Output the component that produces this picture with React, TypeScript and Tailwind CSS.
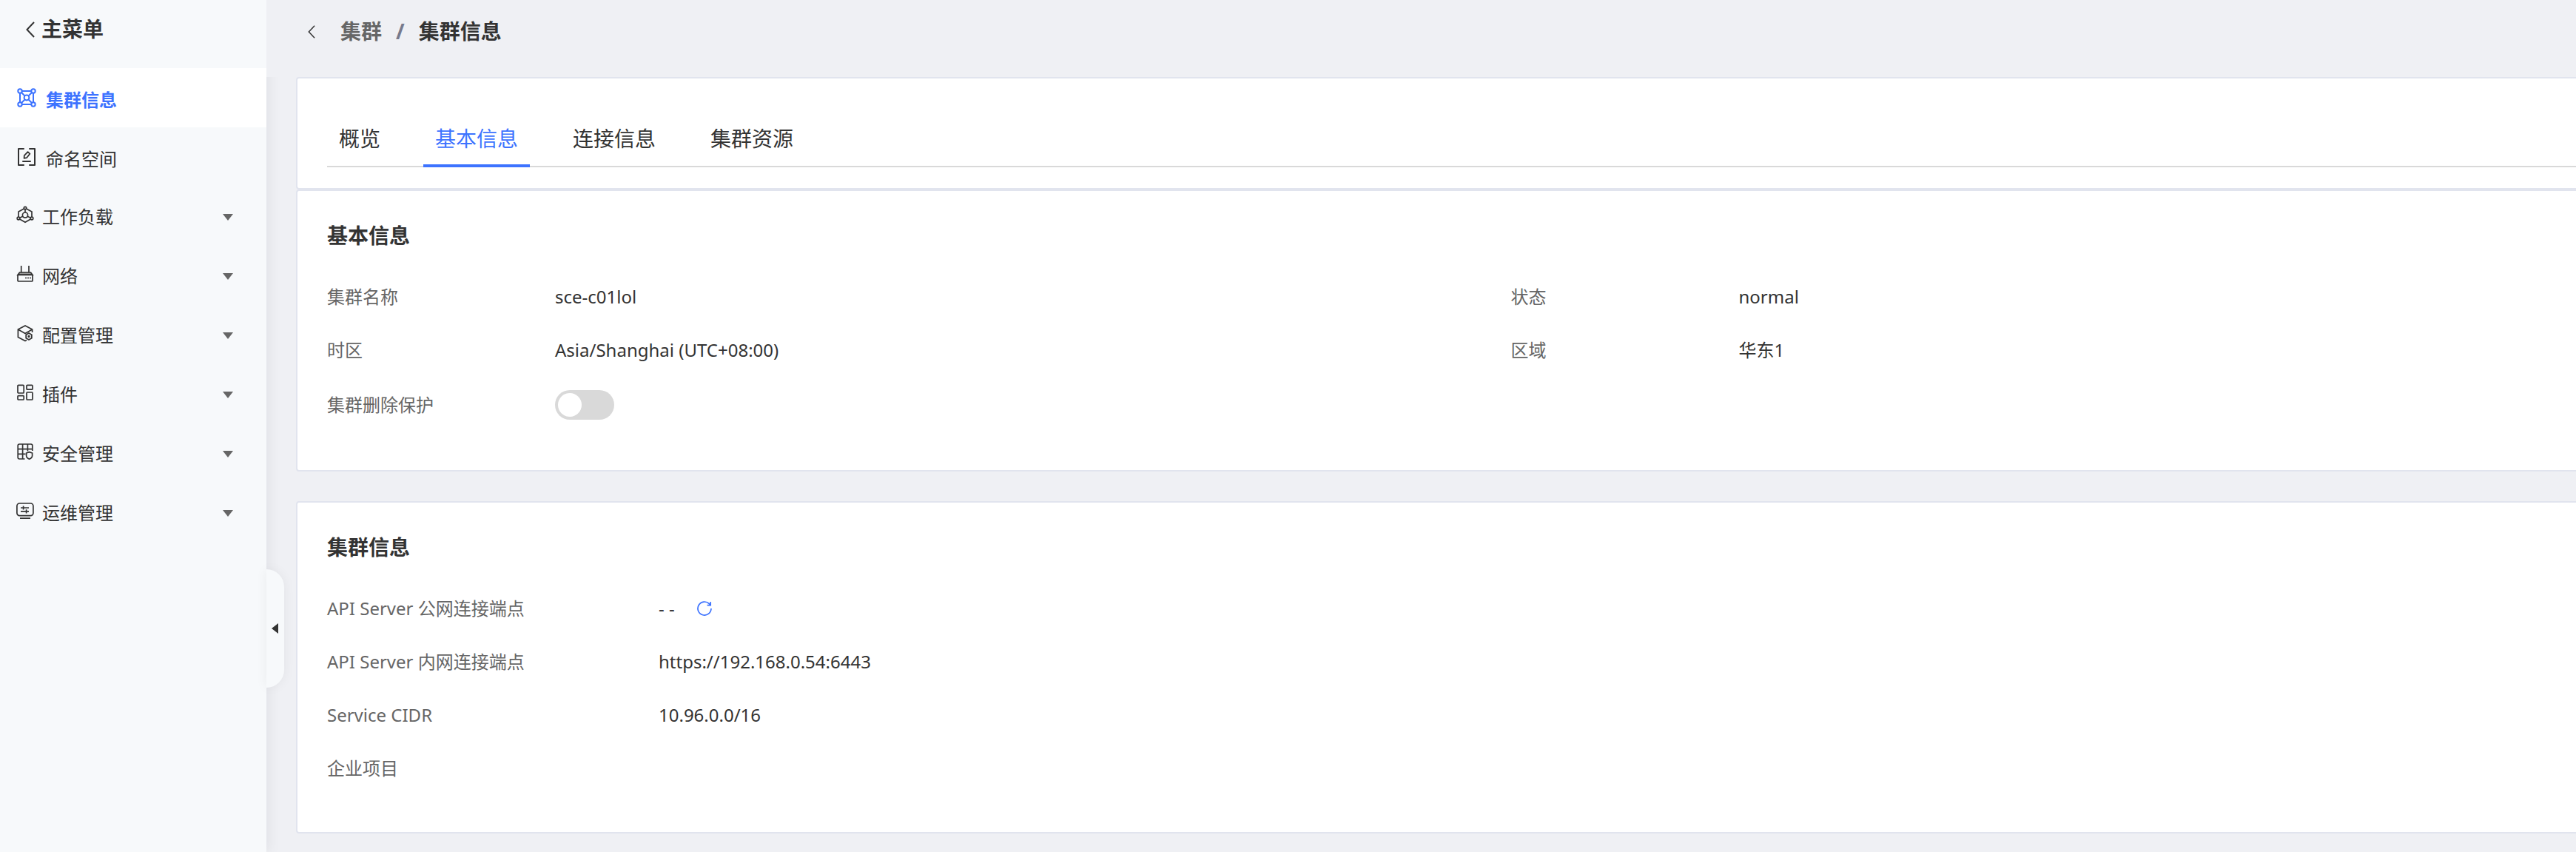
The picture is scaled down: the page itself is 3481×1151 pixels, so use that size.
import { useState } from "react";
import type { ReactNode } from "react";

type IconProps = { className?: string };

const Svg = ({
  box,
  className,
  children,
}: {
  box: number;
  className?: string;
  children: ReactNode;
}) => (
  <svg
    viewBox={`0 0 ${box} ${box}`}
    fill="none"
    stroke="currentColor"
    strokeWidth="1.7"
    className={className}
    aria-hidden="true"
  >
    {children}
  </svg>
);

const ClusterIcon = ({ className }: IconProps) => (
  <Svg box={28} className={className}>
    <g strokeWidth="2">
      <path d="M8 5h12M8 23h12M5 8v12M23 8v12M7 7l4.5 4.5M21 7l-4.5 4.5M7 21l4.5-4.5M21 21l-4.5-4.5" />
      <circle cx="5" cy="5" r="2.7" />
      <circle cx="23" cy="5" r="2.7" />
      <circle cx="5" cy="23" r="2.7" />
      <circle cx="23" cy="23" r="2.7" />
      <circle cx="14" cy="14" r="3.4" />
    </g>
  </Svg>
);

const NamespaceIcon = ({ className }: IconProps) => (
  <Svg box={28} className={className}>
    <g strokeWidth="2" strokeLinecap="round" strokeLinejoin="round">
      <path d="M10 3H3v22h7M18 3h7v22h-7M9 20h10" />
      <path
        d="M15.6 7.2l2.8 2.6-4.4 5.4-3.4.6.2-3.6z"
        strokeWidth="1.8"
      />
    </g>
  </Svg>
);

const WorkloadIcon = ({ className }: IconProps) => (
  <Svg box={24} className={className}>
    <path d="M10.4 4L3 8v7M13.6 4L21 8v7M5 18.2l7 4 7-4M12 5v4M9 14.3L4.6 16.3M15 14.3l4.4 2" />
    <circle cx="12" cy="3" r="1.7" />
    <circle cx="3" cy="17" r="1.8" />
    <circle cx="21" cy="17" r="1.8" />
    <circle cx="12" cy="12.6" r="3.6" />
  </Svg>
);

const NetworkIcon = ({ className }: IconProps) => (
  <Svg box={24} className={className}>
    <path d="M6.7 1v9M17 1v9" />
    <path d="M4.5 10h15l2.5 3.4H2z" fill="#999" />
    <rect x="2" y="13" width="20" height="9" rx="1" />
    <path d="M12 17.5h2M15 17.5h2M18 17.5h2" />
  </Svg>
);

const ConfigIcon = ({ className }: IconProps) => (
  <Svg box={24} className={className}>
    <path d="M21.6 11V7L12 2 2.4 7v10.5L12 22.6l2-1M2.4 7l9.6 5.4L21.6 7" />
    <path d="M17 12l3.8 2.2v4.6L17 21l-3.8-2.2v-4.6z" strokeWidth="1.8" />
    <circle cx="17" cy="16.5" r=".8" fill="currentColor" />
  </Svg>
);

const PluginIcon = ({ className }: IconProps) => (
  <Svg box={24} className={className}>
    <rect x="2" y="2.4" width="8.2" height="10.6" rx="1" />
    <rect x="14" y="2.4" width="8" height="5.8" rx="1" />
    <rect x="2" y="16.6" width="8.2" height="5.4" rx="1" />
    <rect x="14" y="12" width="8" height="10" rx="1" />
  </Svg>
);

const SecurityIcon = ({ className }: IconProps) => (
  <Svg box={24} className={className}>
    <path d="M11.5 22H4a1.8 1.8 0 0 1-1.8-1.8V3.8A1.8 1.8 0 0 1 4 2h16a1.8 1.8 0 0 1 1.8 1.8V11M2.2 8.6h19.6M2.2 15.4h10.3M8.6 2v20M15.4 2v9.5" />
    <path d="M17.6 12.6l4 1.4v3.6c0 2.4-1.8 3.8-4 4.6-2.2-.8-4-2.2-4-4.6V14z" />
  </Svg>
);

const OpsIcon = ({ className }: IconProps) => (
  <Svg box={24} className={className}>
    <rect x=".9" y="2" width="22" height="16.6" rx="3.5" />
    <path d="M5 22.2h14M6 8h11M6 12.8h11M9.6 5.4v5.2M13.6 10.2v5.2" />
  </Svg>
);

const Chevron = ({ className }: IconProps) => (
  <svg viewBox="0 0 12 22" fill="none" stroke="currentColor" className={className} aria-hidden="true">
    <path d="M11 1L1.5 11 11 21" vectorEffect="non-scaling-stroke" />
  </svg>
);

const RefreshIcon = ({ className }: IconProps) => (
  <Svg box={20} className={className}>
    <path d="M19 10a9 9 0 1 1-2.6-6.3L18 5.3M18.2 1v4.6h-4.6" />
  </Svg>
);

const leaves = [
  { label: "集群信息", icon: ClusterIcon, active: true },
  { label: "命名空间", icon: NamespaceIcon, active: false },
];

const groups = [
  { label: "工作负载", icon: WorkloadIcon },
  { label: "网络", icon: NetworkIcon },
  { label: "配置管理", icon: ConfigIcon },
  { label: "插件", icon: PluginIcon },
  { label: "安全管理", icon: SecurityIcon },
  { label: "运维管理", icon: OpsIcon },
];

const tabs = ["概览", "基本信息", "连接信息", "集群资源"];

const Sidebar = () => (
  <aside className="relative w-[360px] flex-none bg-[#f7f9fb] shadow-[4px_0_16px_rgba(0,0,40,0.06)]">
    <a href="#" className="flex h-[92px] items-center gap-[9px] pb-3 pl-[35px] text-[28px] font-bold">
      <Chevron className="h-[22px] w-3 stroke-2" />
      主菜单
    </a>
    <nav>
      {leaves.map(({ label, icon: Icon, active }) => (
        <a
          key={label}
          href="#"
          className={
            active
              ? "flex h-20 items-center gap-3 bg-white pl-[22px] font-bold text-[#3d73ff]"
              : "flex h-20 items-center gap-3 pl-[22px]"
          }
        >
          <Icon className="size-7" />
          <span className="pt-1.5">{label}</span>
        </a>
      ))}
      {groups.map(({ label, icon: Icon }) => (
        <button
          key={label}
          type="button"
          className="flex h-20 w-full items-center gap-[11px] pr-[45px] pb-1 pl-[22px] text-left"
        >
          <Icon className="size-6" />
          <span className="flex-1 pt-1.5">{label}</span>
          <svg viewBox="0 0 14 9" className="mt-1.5 h-[9px] w-3.5" aria-hidden="true">
            <path d="M0 0h14L7 9z" fill="#666" />
          </svg>
        </button>
      ))}
    </nav>
    <button
      type="button"
      aria-label="收起菜单"
      className="absolute top-[769px] left-full flex h-40 w-6 items-center rounded-r-3xl bg-[#f7f9fb] pl-[7px] shadow-[0_0_16px_rgba(0,0,40,0.06)]"
    >
      <svg viewBox="0 0 9 14" className="h-3.5 w-[9px]" aria-hidden="true">
        <path d="M9 0v14L0 7z" fill="#333" />
      </svg>
    </button>
  </aside>
);

const Field = ({
  label,
  wide,
  children,
}: {
  label: string;
  wide?: boolean;
  children?: ReactNode;
}) => (
  <div className="flex items-center py-[18px] leading-9">
    <dt className={wide ? "w-[448px] flex-none text-[#666]" : "w-[308px] flex-none text-[#666]"}>
      {label}
    </dt>
    <dd className="flex items-center">{children}</dd>
  </div>
);

const Section = ({ title, children }: { title: string; children: ReactNode }) => (
  <section className="rounded-l border-2 border-r-0 border-[#e1e4ee] bg-white pt-10 pb-[50px] pl-10">
    <h2 className="mb-[27px] text-[28px] leading-10 font-bold">{title}</h2>
    {children}
  </section>
);

export default function App() {
  const [tab, setTab] = useState("基本信息");
  const [locked, setLocked] = useState(false);

  return (
    <div className="flex min-h-screen bg-[#eff0f4] font-['Noto_Sans','Noto_Sans_CJK_SC',sans-serif] text-2xl text-[#333]">
      <Sidebar />
      <main className="min-w-0 flex-1 pb-6">
        <header className="relative flex h-[104px] items-center bg-[#eff0f4] pb-[18px] pl-14 text-[28px] font-bold">
          <a href="#" aria-label="返回" className="mr-[34px]">
            <Chevron className="h-[18px] w-2.5 stroke-[1.5]" />
          </a>
          <a href="#" className="text-[#666]">
            集群
          </a>
          <span className="mx-[19px] text-[#777a8c]">/</span>
          <h1>集群信息</h1>
        </header>

        <div className="ml-10">
          <div className="rounded-l border-2 border-r-0 border-[#e1e4ee] bg-white pt-10 pb-7 pl-10">
            <div role="tablist" className="flex h-20 gap-[42px] border-b-2 border-[#d9d9d9] text-[28px]">
              {tabs.map((name) => (
                <button
                  key={name}
                  type="button"
                  role="tab"
                  aria-selected={name === tab}
                  onClick={() => setTab(name)}
                  className={
                    name === tab
                      ? "-mb-0.5 border-b-4 border-[#3d73ff] px-4 pt-2 text-[#3d73ff]"
                      : "-mb-0.5 border-b-4 border-transparent px-4 pt-2"
                  }
                >
                  {name}
                </button>
              ))}
            </div>
          </div>

          <Section title="基本信息">
            <dl className="grid grid-cols-[10fr_9fr]">
              <Field label="集群名称">sce-c01lol</Field>
              <Field label="状态">normal</Field>
              <Field label="时区">Asia/Shanghai (UTC+08:00)</Field>
              <Field label="区域">华东1</Field>
              <Field label="集群删除保护">
                <input
                  type="checkbox"
                  role="switch"
                  aria-label="集群删除保护"
                  checked={locked}
                  onChange={(e) => setLocked(e.target.checked)}
                  className="h-10 w-20 appearance-none rounded-full bg-[#d9d9d9] p-1 before:block before:size-8 before:rounded-full before:bg-white checked:bg-[#3d73ff] checked:before:ml-auto"
                />
              </Field>
            </dl>
          </Section>

          <div className="h-10" />

          <Section title="集群信息">
            <dl>
              <Field wide label="API Server 公网连接端点">
                - -
                <button type="button" aria-label="刷新" className="ml-[30px] text-[#3d73ff]">
                  <RefreshIcon className="size-5" />
                </button>
              </Field>
              <Field wide label="API Server 内网连接端点">
                https://192.168.0.54:6443
              </Field>
              <Field wide label="Service CIDR">
                10.96.0.0/16
              </Field>
              <Field wide label="企业项目" />
            </dl>
          </Section>
        </div>
      </main>
    </div>
  );
}
